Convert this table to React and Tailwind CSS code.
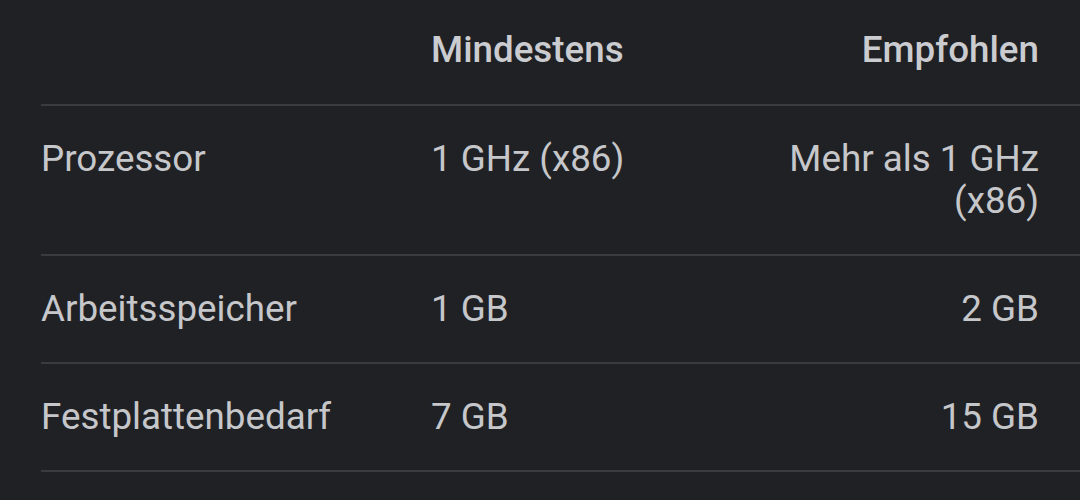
import React from 'react';

const rows = [
  { label: 'Prozessor', min: '1 GHz (x86)', rec: 'Mehr als 1 GHz (x86)' },
  { label: 'Arbeitsspeicher', min: '1 GB', rec: '2 GB' },
  { label: 'Festplattenbedarf', min: '7 GB', rec: '15 GB' },
];

const grid = 'grid grid-cols-[390px_1fr_280px] pr-[41px] border-b-2 border-[#3a3b3f]';

export default function App() {
  return (
    <div className="min-h-[500px] w-full bg-[#202124] pl-[41px] text-[36.75px] leading-[42px] text-[#c6c7ca] font-['Roboto',sans-serif]">
      {/* header */}
      <div className={`${grid} pt-[29px] pb-[33px] font-medium text-[#cbccd0]`}>
        <div />
        <div>Mindestens</div>
        <div className="text-right">Empfohlen</div>
      </div>

      {rows.map((r) => (
        <div key={r.label} className={`${grid} py-8`}>
          <div>{r.label}</div>
          <div>{r.min}</div>
          <div className="text-right">{r.rec}</div>
        </div>
      ))}
    </div>
  );
}
